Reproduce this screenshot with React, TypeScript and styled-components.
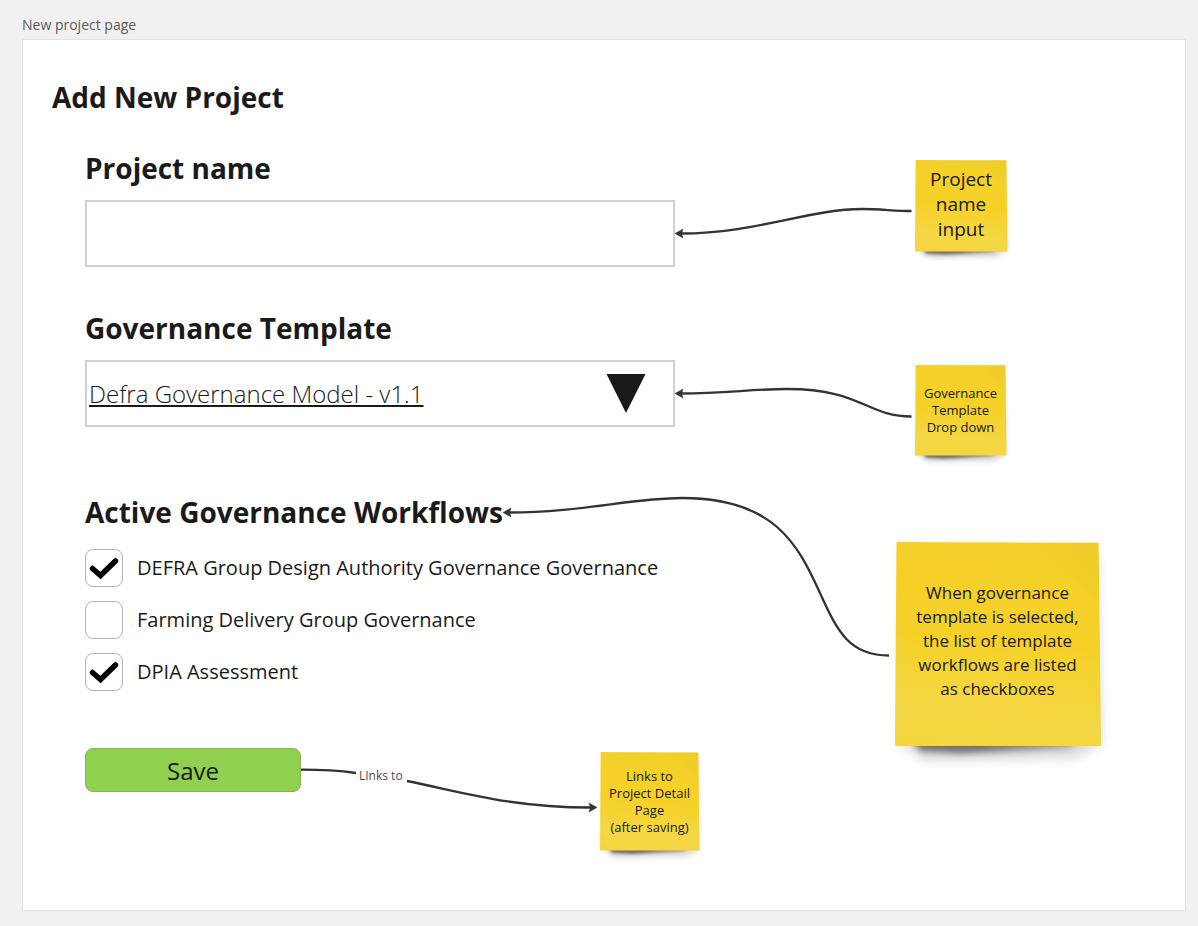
import React, { useState } from 'react';
import styled, { createGlobalStyle } from 'styled-components';

const GlobalStyle = createGlobalStyle`
  *, *::before, *::after { box-sizing: border-box; }
  body {
    margin: 0;
    background: #f1f1f1;
    color: #1a1a1a;
    font-family: 'Open Sans', 'Noto Sans', sans-serif;
  }
  h1, h2, p { margin: 0; }
`;

const Board = styled.div`
  display: flex;
  flex-direction: column;
  min-height: 100vh;
  padding: 15px 12px 15px 22px;
`;

const FrameTitle = styled.p`
  color: #5a5a5a;
  font-size: 14px;
  line-height: 20px;
  margin-bottom: 4px;
`;

const Frame = styled.main`
  position: relative;
  flex: 1;
  padding: 37px 28px 48px 29px;
  background: #fff;
  border: 1px solid #e2e2e2;
`;

const PageTitle = styled.h1`
  font-size: 28px;
  line-height: 40px;
  font-weight: 700;
`;

const Form = styled.form`
  max-width: 623px;
  padding: 31px 0 0 33px;
`;

const Field = styled.div`
  display: flex;
  flex-direction: column;
  gap: 12px;
  margin-bottom: 41px;
`;

const FieldLabel = styled.label`
  font-size: 28px;
  line-height: 40px;
  font-weight: 700;
`;

const TextInput = styled.input`
  width: 100%;
  height: 67px;
  padding: 0 4px;
  border: 2px solid #d0d0d0;
  border-radius: 0;
  background: #fff;
  color: inherit;
  font: inherit;
  font-size: 24px;
`;

const SelectBox = styled.div`
  display: grid;
  align-items: center;
  > * { grid-area: 1 / 1; }
`;

const Select = styled.select`
  appearance: none;
  width: 100%;
  height: 67px;
  padding: 0 72px 0 2px;
  border: 2px solid #d0d0d0;
  border-radius: 0;
  background: #fff;
  color: inherit;
  font: inherit;
  font-size: 24px;
  font-weight: 350;
  text-decoration: underline;
  text-decoration-thickness: 2px;
  text-underline-offset: 2px;
`;

const Arrow = styled.svg`
  justify-self: end;
  margin-right: 29px;
  pointer-events: none;
`;

const Workflows = styled.fieldset`
  display: flex;
  flex-direction: column;
  gap: 14px;
  margin: 65px 0 57px;
  padding: 0;
  border: 0;
`;

const Legend = styled.legend`
  margin-bottom: 17px;
  padding: 0;
  font-size: 28px;
  line-height: 40px;
  font-weight: 700;
`;

const CheckRow = styled.label`
  display: flex;
  align-items: center;
  gap: 14px;
  font-size: 20px;
  line-height: 28px;
`;

const CheckBox = styled.span`
  display: grid;
  flex: none;
  > * { grid-area: 1 / 1; }
  svg { visibility: hidden; pointer-events: none; }
  input:checked + svg { visibility: visible; }
`;

const CheckInput = styled.input`
  appearance: none;
  width: 38px;
  height: 38px;
  margin: 0;
  border: 1px solid #b4b4b4;
  border-radius: 8px;
  background: #fff;
`;

const SaveButton = styled.button`
  display: block;
  width: 216px;
  height: 44px;
  padding: 0;
  border: 1px solid #86b35a;
  border-radius: 8px;
  background: #8fd14f;
  color: inherit;
  font: inherit;
  font-size: 24px;
`;

const Connectors = styled.svg`
  position: absolute;
  inset: 0;
  width: 100%;
  height: 100%;
  overflow: visible;
  pointer-events: none;
`;

const ConnectorLabel = styled.span<{ $x: number; $y: number }>`
  position: absolute;
  left: ${p => p.$x}px;
  top: ${p => p.$y}px;
  color: #4d4d4d;
  font-size: 12px;
  line-height: 18px;
  white-space: nowrap;
`;

const NoteBox = styled.aside<{ $x: number; $y: number; $size: number }>`
  position: absolute;
  left: ${p => p.$x}px;
  top: ${p => p.$y}px;
  width: ${p => p.$size}px;
  height: ${p => p.$size}px;
  display: grid;
  place-items: center;
  > * { grid-area: 1 / 1; }
`;

const Paper = styled.svg`
  width: 100%;
  height: 100%;
  overflow: visible;
`;

const NoteText = styled.p<{ $font: number; $line: number; $lift: number }>`
  position: relative;
  padding-bottom: ${p => p.$lift}px;
  font-size: ${p => p.$font}px;
  line-height: ${p => p.$line}px;
  text-align: center;
  white-space: pre;
`;

const noteSizes = {
  small: { font: 13, line: 17, lift: 0 },
  medium: { font: 17, line: 24, lift: 8 },
  large: { font: 19, line: 25, lift: 4 },
};

type NoteProps = {
  id: string;
  x: number;
  y: number;
  size: number;
  text: string;
  kind: keyof typeof noteSizes;
};

function Note({ id, x, y, size, text, kind }: NoteProps) {
  const { font, line, lift } = noteSizes[kind];
  return (
    <NoteBox $x={x} $y={y} $size={size}>
      <Paper viewBox="0 0 100 100" aria-hidden="true">
        <defs>
          <linearGradient id={`${id}-face`} x1="0.1" y1="0" x2="0" y2="1">
            <stop offset="0" stopColor="#f4d02a" />
            <stop offset="0.45" stopColor="#f5d128" />
            <stop offset="0.8" stopColor="#f5d745" />
            <stop offset="1" stopColor="#f4d53d" />
          </linearGradient>
          <linearGradient id={`${id}-corner`} x1="1" y1="0.3" x2="0.3" y2="0.7">
            <stop offset="0" stopColor="#e6c423" stopOpacity="0.3" />
            <stop offset="1" stopColor="#e6c423" stopOpacity="0" />
          </linearGradient>
          <linearGradient id={`${id}-fade`} x1="0" y1="0" x2="1" y2="0">
            <stop offset="0" stopColor="#000" stopOpacity="0.5" />
            <stop offset="0.4" stopColor="#000" stopOpacity="0.5" />
            <stop offset="1" stopColor="#000" stopOpacity="0.25" />
          </linearGradient>
          <filter id={`${id}-soft`} x="-20%" y="-20%" width="140%" height="140%">
            <feGaussianBlur stdDeviation="2.5" />
          </filter>
          <filter id={`${id}-dark`} x="-20%" y="-100%" width="140%" height="300%">
            <feGaussianBlur stdDeviation="1.8" />
          </filter>
        </defs>
        <path d="M4 8L99 6L101 98L88 106L14 107L2 98Z" fill="#000" opacity="0.13" filter={`url(#${id}-soft)`} />
        <path d="M7 94H96L84 100.500L32 103L12 102Z" fill={`url(#${id}-fade)`} filter={`url(#${id}-dark)`} />
        <path d="M0.700 0L99.300 0.400L100.500 99.500H0Z" fill={`url(#${id}-face)`} />
        <path d="M66 0.300L99.300 0.400L99.600 30Z" fill={`url(#${id}-corner)`} />
      </Paper>
      <NoteText $font={font} $line={line} $lift={lift}>{text}</NoteText>
    </NoteBox>
  );
}

const connectorPaths = [
  'M888.500 171C872 171 857 169 839 169C787 169 732 193.500 658 193.500',
  'M888.500 376.500C843 376.500 839 349 764 349C729 349 702 353.500 658 353.500',
  'M866 615.500C827 615.500 815 593 797 553C775 505 752 458 659 458C609 458 557 472.500 486 472.500',
  'M278 729.700C297 729.700 315 730.500 333 733',
  'M384 741C439 752 487 767.500 568 767.500',
];

const arrowHeads = [
  { x: 652, y: 193.5, turn: 0 },
  { x: 652, y: 353.5, turn: 0 },
  { x: 480, y: 472.5, turn: 0 },
  { x: 574, y: 767.5, turn: 180 },
];

const initialWorkflows = [
  { name: 'DEFRA Group Design Authority Governance Governance', active: true },
  { name: 'Farming Delivery Group Governance', active: false },
  { name: 'DPIA Assessment', active: true },
];

export default function App() {
  const [workflows, setWorkflows] = useState(initialWorkflows);
  const toggle = (index: number) =>
    setWorkflows(list => list.map((w, i) => (i === index ? { ...w, active: !w.active } : w)));

  return (
    <Board>
      <GlobalStyle />
      <FrameTitle>New project page</FrameTitle>
      <Frame>
        <PageTitle>Add New Project</PageTitle>
        <Form onSubmit={e => e.preventDefault()}>
          <Field>
            <FieldLabel htmlFor="project-name">Project name</FieldLabel>
            <TextInput id="project-name" type="text" />
          </Field>
          <Field>
            <FieldLabel htmlFor="template">Governance Template</FieldLabel>
            <SelectBox>
              <Select id="template">
                <option>Defra Governance Model - v1.1</option>
              </Select>
              <Arrow width="40" height="40" viewBox="0 0 40 40" aria-hidden="true">
                <path d="M0.500 0H39.500L20 39Z" fill="#1a1a1a" />
              </Arrow>
            </SelectBox>
          </Field>
          <Workflows>
            <Legend>Active Governance Workflows</Legend>
            {workflows.map((w, i) => (
              <CheckRow key={w.name}>
                <CheckBox>
                  <CheckInput type="checkbox" checked={w.active} onChange={() => toggle(i)} />
                  <svg width="38" height="38" viewBox="0 0 38 38" aria-hidden="true">
                    <path d="M7.500 19.500L15.500 26.500L30.500 12" fill="none" stroke="#000" strokeWidth="5.500" strokeLinecap="round" />
                  </svg>
                </CheckBox>
                {w.name}
              </CheckRow>
            ))}
          </Workflows>
          <SaveButton type="submit">Save</SaveButton>
        </Form>

        <Connectors aria-hidden="true">
          {connectorPaths.map(d => (
            <path key={d} d={d} fill="none" stroke="#333" strokeWidth="2.300" />
          ))}
          {arrowHeads.map(a => (
            <path
              key={`${a.x}-${a.y}`}
              d="M0 0L8 -4.500L6.500 0L8 4.500Z"
              fill="#333"
              stroke="#333"
              strokeWidth="0.500"
              transform={`translate(${a.x} ${a.y}) rotate(${a.turn})`}
            />
          ))}
        </Connectors>
        <ConnectorLabel $x={336} $y={727}>LInks to</ConnectorLabel>

        <Note id="note-name" x={892} y={120} size={92} kind="large" text={'Project\nname\ninput'} />
        <Note id="note-template" x={892} y={325} size={91} kind="small" text={'Governance\nTemplate\nDrop down'} />
        <Note
          id="note-workflows"
          x={872}
          y={502}
          size={205}
          kind="medium"
          text={'When governance\ntemplate is selected,\nthe list of template\nworkflows are listed\nas checkboxes'}
        />
        <Note id="note-save" x={577} y={712} size={99} kind="small" text={'Links to\nProject Detail\nPage\n(after saving)'} />
      </Frame>
    </Board>
  );
}
